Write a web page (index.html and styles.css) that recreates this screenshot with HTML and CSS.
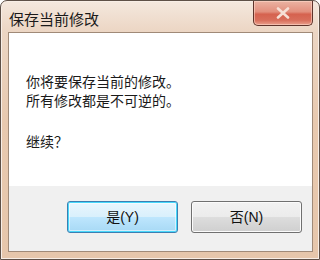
FILE: index.html
```html
<!DOCTYPE html>
<html lang="zh-CN">
<head>
<meta charset="utf-8">
<title>保存当前修改</title>
<link rel="stylesheet" href="styles.css">
</head>
<body>
<div class="window">
  <div class="titlebar">
    <span class="title">保存当前修改</span>
    <button class="close" aria-label="关闭">
      <svg width="16" height="12" viewBox="0 0 16 12"><path d="M3 1.5 L13 10.5 M13 1.5 L3 10.5" stroke="#f6e0d6" stroke-width="2.6" stroke-linecap="round"/></svg>
    </button>
  </div>
  <div class="client">
    <div class="content">
      <p class="msg">你将要保存当前的修改。<br>所有修改都是不可逆的。</p>
      <p class="msg ask">继续？</p>
    </div>
    <div class="actions">
      <button class="btn btn-default">是(Y)</button>
      <button class="btn">否(N)</button>
    </div>
  </div>
</div>
</body>
</html>
```

FILE: styles.css
```css
html, body {
  margin: 0;
  padding: 0;
  background: #ffffff;
}
body {
  width: 320px;
  height: 260px;
  overflow: hidden;
  font-family: "Liberation Sans", "Noto Sans CJK SC", sans-serif;
}
.window {
  box-sizing: border-box;
  width: 320px;
  height: 260px;
  border: 1px solid #5e5047;
  border-radius: 7px 7px 0 0;
  background: linear-gradient(#f4e8de 0px, #ecd6c4 30px, #e8c9af 120px, #e6c6ab 100%);
  box-shadow: inset 0 0 0 1px #f8eee6;
  padding: 0 6px 7px 7px;
  display: flex;
  flex-direction: column;
}
.titlebar {
  height: 31px;
  display: flex;
  align-items: flex-start;
  justify-content: space-between;
  flex: none;
}
.title {
  font-family: "Noto Sans CJK SC", sans-serif;
  font-size: 15px;
  line-height: 16px;
  color: #1a1a1a;
  margin-top: 10px;
  margin-left: 1px;
}
.close {
  box-sizing: border-box;
  width: 60px;
  height: 25px;
  margin: 0;
  padding: 0;
  border: 1px solid #5f342b;
  border-top: none;
  border-radius: 0 0 5px 5px;
  background: linear-gradient(#eab3a3 0%, #e28f7d 45%, #d5624f 55%, #d86e5b 80%, #e9a08c 100%);
  box-shadow: inset 0 0 0 1px rgba(255, 220, 205, 0.55);
  display: flex;
  align-items: center;
  justify-content: center;
}
.client {
  flex: 1;
  border: 1px solid #a08a78;
  background: #ffffff;
  display: flex;
  flex-direction: column;
}
.content {
  flex: 1;
  padding: 39px 0 0 17px;
}
.msg {
  margin: 0;
  font-family: "Noto Sans CJK SC", sans-serif;
  font-size: 14px;
  line-height: 19px;
  color: #1a1a1a;
}
.ask {
  margin-top: 22px;
}
.actions {
  height: 65px;
  flex: none;
  background: #f0f0f0;
  display: flex;
  justify-content: flex-end;
  align-items: flex-start;
  gap: 13px;
  padding: 15px 10px 0 0;
  box-sizing: border-box;
}
.btn {
  box-sizing: border-box;
  width: 111px;
  height: 32px;
  margin: 0;
  padding: 0;
  border: 1px solid #707070;
  border-radius: 3px;
  background: linear-gradient(#f2f2f2 0%, #ebebeb 50%, #dddddd 51%, #cfcfcf 100%);
  box-shadow: inset 0 0 0 1px #fbfbfb;
  font-family: "Liberation Sans", "Noto Sans CJK SC", sans-serif;
  font-size: 14px;
  color: #111;
  line-height: 30px;
}
.btn-default {
  border-color: #3c7fb1;
  background: linear-gradient(#eaf6fd 0%, #d9f0fc 50%, #bee6fd 51%, #a7d9f5 100%);
  box-shadow: inset 0 0 0 1px #48d8fb, inset 0 0 0 2px rgba(255, 255, 255, 0.5);
}
```
